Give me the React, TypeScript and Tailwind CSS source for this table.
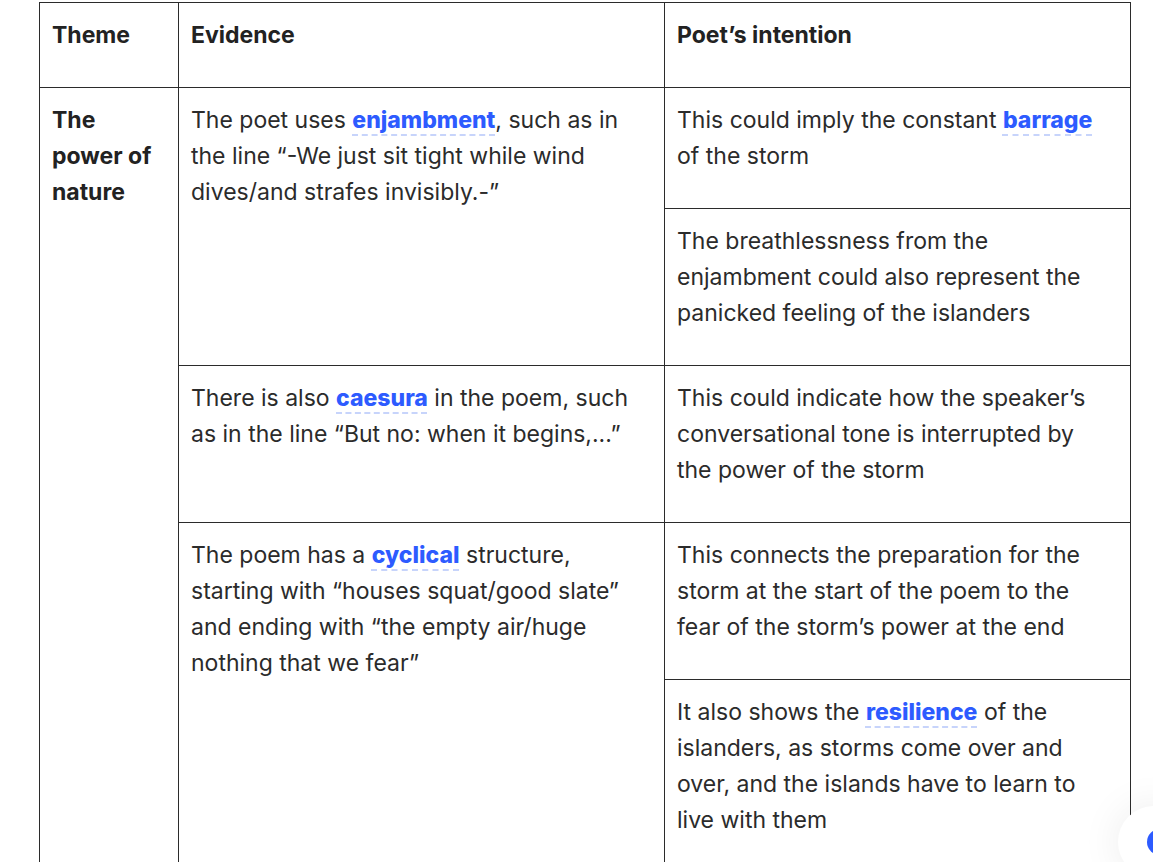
import React from "react"

const Term = ({ children }: { children: React.ReactNode }) => (
  <span className="font-extrabold text-[#2d5bff] underline decoration-dashed decoration-[#c7d4fb] decoration-2 underline-offset-[6px]">
    {children}
  </span>
)

const cell = "border border-[#2b2b2b] align-top px-[12px] pt-[14px] pb-[34px]"

export default function App() {
  return (
    <div
      className="relative min-h-[862px] overflow-hidden bg-white pl-[39px] pt-[2px] text-[23px] leading-[36px] text-[#2b2b2b]"
      style={{ fontFamily: "Inter, 'Noto Sans', sans-serif" }}
    >
      <table className="w-[1091px] table-fixed border-collapse">
        <colgroup>
          <col className="w-[139px]" />
          <col className="w-[486px]" />
          <col className="w-[466px]" />
        </colgroup>
        <thead>
          <tr>
            <th className={`${cell} text-left font-bold text-[#222]`}>Theme</th>
            <th className={`${cell} text-left font-bold text-[#222]`}>Evidence</th>
            <th className={`${cell} text-left font-bold text-[#222]`}>Poet’s intention</th>
          </tr>
        </thead>
        <tbody>
          <tr>
            <td rowSpan={5} className={`${cell} font-bold text-[#222]`}>
              The
              <br />
              power of
              <br />
              nature
            </td>
            <td rowSpan={2} className={cell}>
              The poet uses <Term>enjambment</Term>, such as in
              <br />
              the line “-We just sit tight while wind
              <br />
              dives/and strafes invisibly.-”
            </td>
            <td className={cell}>
              This could imply the constant <Term>barrage</Term>
              <br />
              of the storm
            </td>
          </tr>
          <tr>
            <td className={cell}>
              The breathlessness from the
              <br />
              enjambment could also represent the
              <br />
              panicked feeling of the islanders
            </td>
          </tr>
          <tr>
            <td className={cell}>
              There is also <Term>caesura</Term> in the poem, such
              <br />
              as in the line “But no: when it begins,...”
            </td>
            <td className={cell}>
              This could indicate how the speaker’s
              <br />
              conversational tone is interrupted by
              <br />
              the power of the storm
            </td>
          </tr>
          <tr>
            <td rowSpan={2} className={cell}>
              The poem has a <Term>cyclical</Term> structure,
              <br />
              starting with “houses squat/good slate”
              <br />
              and ending with “the empty air/huge
              <br />
              nothing that we fear”
            </td>
            <td className={cell}>
              This connects the preparation for the
              <br />
              storm at the start of the poem to the
              <br />
              fear of the storm’s power at the end
            </td>
          </tr>
          <tr>
            <td className={cell}>
              It also shows the <Term>resilience</Term> of the
              <br />
              islanders, as storms come over and
              <br />
              over, and the islands have to learn to
              <br />
              live with them
            </td>
          </tr>
        </tbody>
      </table>

      {/* floating help button, mostly off-screen */}
      <div className="absolute left-[1118px] top-[806px] h-[72px] w-[72px] rounded-full bg-white shadow-[0_0_40px_rgba(0,0,0,0.08)]">
        <div className="absolute left-[29px] top-[23px] h-[26px] w-[26px] rounded-full bg-[#2d5bff]" />
      </div>
    </div>
  )
}
